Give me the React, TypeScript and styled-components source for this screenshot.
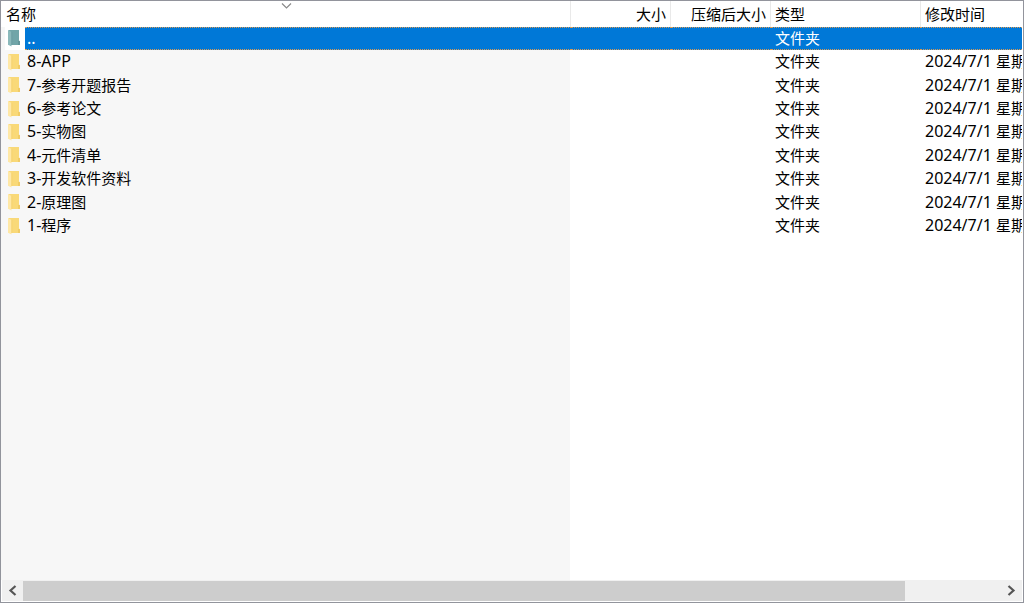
import React, { useState } from "react";
import styled, { createGlobalStyle, css } from "styled-components";

const GlobalStyle = createGlobalStyle`
  * { box-sizing: border-box; }
  body {
    margin: 0;
    background: #fff;
    color: #000;
    font: 15px/20px "Noto Sans", "Noto Sans CJK SC", sans-serif;
  }
`;

const columns = "minmax(0, 1fr) 100px 100px 150px 101px";

const Window = styled.main`
  display: flex;
  flex-direction: column;
  min-height: 100vh;
  padding: 0 1px 1px 0;
  border: 1px solid #92949c;
  overflow: hidden;
`;

const ListPane = styled.section`
  flex: 1;
  background: linear-gradient(#f7f7f7, #f7f7f7) no-repeat left top / calc(100% - 452px) 100%;
`;

const FileTable = styled.table`
  display: block;
  width: 100%;
`;

const TableHead = styled.thead`
  display: block;
  background: #fff;
`;

const HeadRow = styled.tr`
  display: grid;
  grid-template-columns: ${columns};
  height: 26px;
`;

const HeadCell = styled.th`
  position: relative;
  padding: 0;
  border-right: 1px solid #e9e9e9;
  font-weight: 400;
  &:last-child { border-right: 0; }
`;

const HeadButton = styled.button<{ $end?: boolean }>`
  display: block;
  width: 100%;
  height: 26px;
  padding: 0 4px;
  border: 0;
  background: none;
  color: inherit;
  font: inherit;
  text-align: ${(p) => (p.$end ? "right" : "left")};
`;

const NameHeadButton = styled(HeadButton)`
  padding-left: 5px;
`;

const SortMark = styled.svg`
  position: absolute;
  top: 1px;
  left: 50%;
  width: 11px;
  height: 7px;
  margin-left: -5px;
`;

const TableBody = styled.tbody`
  display: grid;
  grid-template-rows: repeat(9, 1fr);
  height: 211px;
  line-height: 18px;
`;

const Row = styled.tr`
  display: grid;
  grid-template-columns: ${columns};
`;

const selectedFill = css`
  background: #0078d7;
  color: #fff;
  border: 0 dotted #d99a55;
  border-width: 1px 0;
`;

const Cell = styled.td<{ $selected?: boolean }>`
  display: flex;
  align-items: center;
  padding: 0 0 2px 4px;
  overflow: hidden;
  white-space: pre;
  ${(p) => p.$selected && selectedFill}
`;

const NameCell = styled.td`
  display: flex;
  padding: 0;
  overflow: hidden;
`;

const IconBox = styled.span<{ $selected?: boolean }>`
  display: flex;
  flex: none;
  align-items: center;
  width: 20px;
  margin-left: 4px;
  padding: 0 0 1px 2px;
  background: ${(p) => (p.$selected ? "#fff" : "none")};
`;

const Label = styled.span<{ $selected?: boolean }>`
  display: flex;
  flex: 1;
  align-items: center;
  padding: 0 0 2px 2px;
  white-space: pre;
  ${(p) => p.$selected && selectedFill}
`;

const Latin = styled.span`
  font-size: 16px;
`;

const ScrollBar = styled.div`
  display: flex;
  height: 21px;
  margin-left: 1px;
  background: #f0f0f0;
`;

const ScrollButton = styled.button`
  display: flex;
  flex: none;
  align-items: center;
  justify-content: center;
  width: 21px;
  padding: 0;
  border: 0;
  background: none;
`;

const Track = styled.div`
  flex: 1;
`;

const Thumb = styled.div`
  width: 90.2%;
  height: 20px;
  margin-top: 1px;
  background: #cdcdcd;
`;

function Folder({ up }: { up?: boolean }) {
  const [back, flap, edge] = up
    ? ["#71a5a8", "#8bb9bb", "#64969a"]
    : ["#f9d978", "#ffe8a6", "#f0cb68"];
  return (
    <svg width="14" height="18" viewBox="0 0 14 18" aria-hidden="true">
      <path d="M1.500 1h10.500v10.500l1 .8V16H1.500z" fill={back} />
      <path d="M11 12h1.300l.7.5V16h-2z" fill={edge} />
      <path d="M1 1l3.500 2v14.500L1 15.800z" fill={flap} />
      <path d="M4.800 3v13" stroke={edge} strokeWidth=".6" />
    </svg>
  );
}

function Arrow({ right }: { right?: boolean }) {
  return (
    <svg width="9" height="11" viewBox="0 0 9 11" aria-hidden="true">
      <path
        d={right ? "M1.5 1L6.5 5.5L1.5 10" : "M7.5 1L2.5 5.5L7.5 10"}
        fill="none"
        stroke="#555"
        strokeWidth="2.2"
      />
    </svg>
  );
}

type Entry = { prefix: string; title: string; date?: string; weekday?: string };

const day = { date: "2024/7/1 ", weekday: "星期" };

const entries: Entry[] = [
  { prefix: "..", title: "" },
  { prefix: "8-APP", title: "", ...day },
  { prefix: "7-", title: "参考开题报告", ...day },
  { prefix: "6-", title: "参考论文", ...day },
  { prefix: "5-", title: "实物图", ...day },
  { prefix: "4-", title: "元件清单", ...day },
  { prefix: "3-", title: "开发软件资料", ...day },
  { prefix: "2-", title: "原理图", ...day },
  { prefix: "1-", title: "程序", ...day },
];

export default function App() {
  const [selected, setSelected] = useState("..");
  return (
    <Window>
      <GlobalStyle />
      <ListPane>
        <FileTable>
          <TableHead>
            <HeadRow>
              <HeadCell>
                <NameHeadButton>名称</NameHeadButton>
                <SortMark viewBox="0 0 11 7" aria-hidden="true">
                  <path d="M1 1.5L5.5 6L10 1.5" fill="none" stroke="#8a8a8a" strokeWidth="1.2" />
                </SortMark>
              </HeadCell>
              <HeadCell><HeadButton $end>大小</HeadButton></HeadCell>
              <HeadCell><HeadButton $end>压缩后大小</HeadButton></HeadCell>
              <HeadCell><HeadButton>类型</HeadButton></HeadCell>
              <HeadCell><HeadButton>修改时间</HeadButton></HeadCell>
            </HeadRow>
          </TableHead>
          <TableBody>
            {entries.map(({ prefix, title, date, weekday }) => {
              const on = prefix === selected;
              return (
                <Row key={prefix} onClick={() => setSelected(prefix)}>
                  <NameCell>
                    <IconBox $selected={on}><Folder up={prefix === ".."} /></IconBox>
                    <Label $selected={on}><Latin>{prefix}</Latin>{title}</Label>
                  </NameCell>
                  <Cell $selected={on} />
                  <Cell $selected={on} />
                  <Cell $selected={on}>文件夹</Cell>
                  <Cell $selected={on}>{date && <Latin>{date}</Latin>}{weekday}</Cell>
                </Row>
              );
            })}
          </TableBody>
        </FileTable>
      </ListPane>
      <ScrollBar>
        <ScrollButton aria-label="向左滚动"><Arrow /></ScrollButton>
        <Track><Thumb /></Track>
        <ScrollButton aria-label="向右滚动"><Arrow right /></ScrollButton>
      </ScrollBar>
    </Window>
  );
}
